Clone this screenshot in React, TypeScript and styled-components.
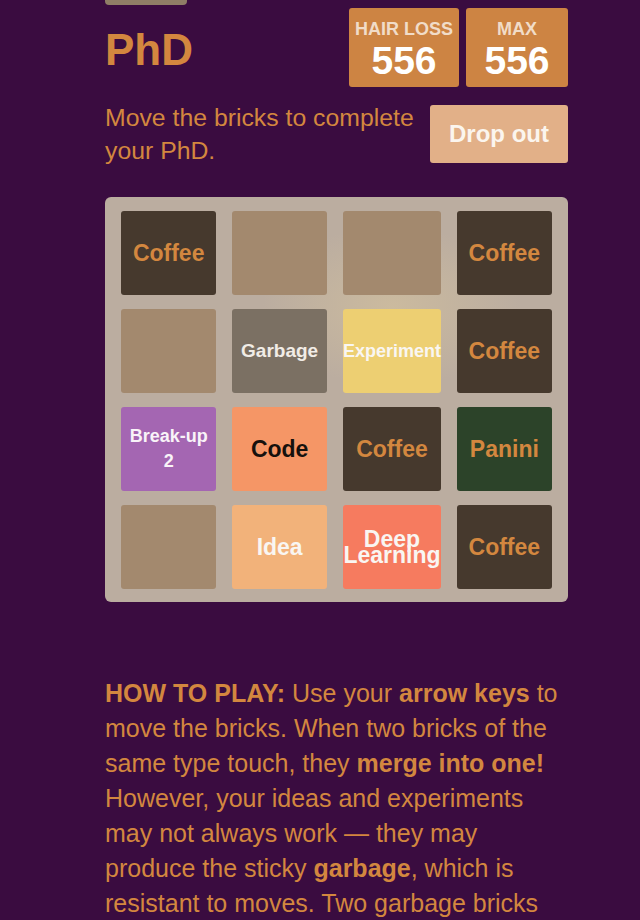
import React from "react";
import styled, { createGlobalStyle } from "styled-components";

const Global = createGlobalStyle`
  html, body { margin: 0; padding: 0; background: #3a0c40; }
  body { font-family: "Liberation Sans", Arial, sans-serif; }
`;

const Page = styled.div`
  width: 463px;
  margin-left: 105px;
  color: #d3873f;
`;

const TopStub = styled.div`
  width: 82px;
  height: 5px;
  background: #8f7e66;
  border-radius: 0 0 4px 4px;
`;

const Header = styled.div`
  display: flex;
  align-items: center;
  justify-content: space-between;
  margin-top: 3px;
`;

const Title = styled.h1`
  margin: 4px 0 0 0;
  font-size: 44px;
  font-weight: bold;
  line-height: 1;
  color: #d3873f;
`;

const Scores = styled.div`
  display: flex;
  gap: 7px;
`;

const ScoreBox = styled.div`
  box-sizing: border-box;
  min-width: 102px;
  height: 79px;
  padding: 10px 6px 5px;
  background: #cd8443;
  border-radius: 3px;
  text-align: center;
`;

const ScoreLabel = styled.div`
  font-size: 18px;
  line-height: 22px;
  font-weight: bold;
  color: #f1dcc8;
`;

const ScoreValue = styled.div`
  font-size: 39px;
  line-height: 42px;
  font-weight: bold;
  color: #ffffff;
`;

const IntroRow = styled.div`
  display: flex;
  align-items: center;
  justify-content: space-between;
  margin-top: 14px;
`;

const Intro = styled.p`
  margin: 0;
  width: 320px;
  font-size: 24.8px;
  line-height: 33px;
`;

const Button = styled.button`
  box-sizing: border-box;
  height: 58px;
  width: 138px;
  border: none;
  border-radius: 3px;
  background: #e2b088;
  color: #fbf5ee;
  font-family: inherit;
  font-size: 24px;
  font-weight: bold;
  padding: 0;
`;

const Board = styled.div`
  margin-top: 30px;
  box-sizing: border-box;
  width: 463px;
  padding: 14px 16px 13px;
  border-radius: 6px;
  background:
    radial-gradient(ellipse 130px 80px at 62% 27%, rgba(210, 192, 158, 0.7), rgba(210, 192, 158, 0)),
    #bbada0;
  display: grid;
  grid-template-columns: repeat(4, 1fr);
  grid-auto-rows: 84px;
  column-gap: 15.67px;
  row-gap: 14px;
`;

const Cell = styled.div<{ $bg: string; $fg: string; $size: number; $lh: number }>`
  border-radius: 3px;
  background: ${(p) => p.$bg};
  color: ${(p) => p.$fg};
  font-size: ${(p) => p.$size}px;
  line-height: ${(p) => p.$lh}px;
  font-weight: bold;
  display: flex;
  align-items: center;
`;

const CellText = styled.span`
  display: block;
  width: 100%;
  text-align: center;
`;

const Explanation = styled.p`
  margin: 74px 0 0 0;
  font-size: 25px;
  line-height: 35px;
`;

type Tile = {
  label?: React.ReactNode;
  bg: string;
  fg?: string;
  size?: number;
  lh?: number;
};

const EMPTY: Tile = { bg: "#a3896e" };
const COFFEE: Tile = { label: "Coffee", bg: "#46392d", fg: "#d3873f" };

const tiles: Tile[] = [
  COFFEE,
  EMPTY,
  EMPTY,
  COFFEE,
  EMPTY,
  { label: "Garbage", bg: "#7b7063", fg: "#f1ece6", size: 19 },
  { label: "Experiment", bg: "#edcf72", fg: "#f9f6f2", size: 18 },
  COFFEE,
  {
    label: (
      <>
        Break-up
        <br />2
      </>
    ),
    bg: "#a466b2",
    fg: "#f9f3f8",
    size: 18,
    lh: 25,
  },
  { label: "Code", bg: "#f59666", fg: "#16110d" },
  COFFEE,
  { label: "Panini", bg: "#2c4329", fg: "#d3873f" },
  EMPTY,
  { label: "Idea", bg: "#f2b27a", fg: "#f9f6f2" },
  { label: "Deep Learning", bg: "#f67b5f", fg: "#f9f6f2", lh: 16 },
  COFFEE,
];

export default function App() {
  return (
    <>
      <Global />
      <Page>
        <TopStub />
        <Header>
          <Title>PhD</Title>
          <Scores>
            <ScoreBox>
              <ScoreLabel>HAIR LOSS</ScoreLabel>
              <ScoreValue>556</ScoreValue>
            </ScoreBox>
            <ScoreBox>
              <ScoreLabel>MAX</ScoreLabel>
              <ScoreValue>556</ScoreValue>
            </ScoreBox>
          </Scores>
        </Header>
        <IntroRow>
          <Intro>Move the bricks to complete your PhD.</Intro>
          <Button>Drop out</Button>
        </IntroRow>
        <Board>
          {tiles.map((t, i) => (
            <Cell
              key={i}
              $bg={t.bg}
              $fg={t.fg ?? "#fff"}
              $size={t.size ?? 23}
              $lh={t.lh ?? 26}
            >
              {t.label ? <CellText>{t.label}</CellText> : null}
            </Cell>
          ))}
        </Board>
        <Explanation>
          <b>HOW TO PLAY:</b> Use your <b>arrow keys</b> to move the bricks. When two
          bricks of the same type touch, they <b>merge into one!</b> However, your
          ideas and experiments may not always work — they may produce the sticky{" "}
          <b>garbage</b>, which is resistant to moves. Two garbage bricks vanish when
          they merge.
        </Explanation>
      </Page>
    </>
  );
}
